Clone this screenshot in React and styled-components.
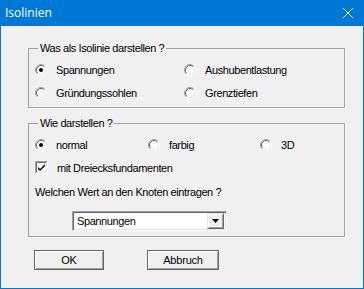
import React from 'react';
import styled, { createGlobalStyle } from 'styled-components';

const GlobalStyle = createGlobalStyle`
    html, body {
        margin: 0;
        padding: 0;
        background: #f0f0f0;
    }

    body {
        font-family: "Liberation Sans", Arial, sans-serif;
        font-size: 11px;
        letter-spacing: -0.4px;
        color: #000;
    }
`;

const Window = styled.div`
    width: 364px;
    height: 289px;
    box-sizing: border-box;
    border: 1px solid #0078d7;
    border-top: none;
    background: #f0f0f0;
    display: flex;
    flex-direction: column;
`;

const TitleBar = styled.div`
    height: 26px;
    margin: 0 -1px;
    background: #0078d7;
    color: #fff;
    display: flex;
    align-items: center;
    justify-content: space-between;
    padding: 0 11px 0 5px;
    flex-shrink: 0;
`;

const Title = styled.span`
    font-family: "Open Sans", "Noto Sans", sans-serif;
    font-size: 12px;
    letter-spacing: 0;
    line-height: 16px;
    margin-top: -1px;
`;

const Body = styled.div`
    padding: 16px 18px 0 27px;
    display: flex;
    flex-direction: column;
`;

const Group = styled.fieldset`
    margin: ${props => props.$top || 0}px 0 0;
    padding: 0;
    border: 1px solid #a0a0a0;
    box-shadow: 1px 1px 0 #fff;
    min-inline-size: 0;
`;

const Legend = styled.legend`
    margin-left: 9px;
    padding: 0 2px;
    font-size: 11px;
    line-height: 13px;
`;

const GroupInner = styled.div`
    padding: 3px 6px ${props => props.$bottom}px;
`;

const OptionGrid = styled.div`
    display: grid;
    grid-template-columns: ${props => props.$cols};
`;

const Option = styled.label`
    display: flex;
    align-items: center;
    gap: 9px;
    height: 23px;
    grid-column: ${props => props.$span ? '1 / -1' : 'auto'};
    white-space: nowrap;
`;

const Question = styled.div`
    margin-top: 7px;
    line-height: 13px;
`;

const Select = styled.div`
    margin: 12px 0 0 37px;
    width: 155px;
    height: 20px;
    box-sizing: border-box;
    background: #fff;
    border: 1px solid;
    border-color: #a0a0a0 #fff #fff #a0a0a0;
    box-shadow: inset 1px 1px 0 #696969, inset -1px -1px 0 #e3e3e3;
    display: flex;
    align-items: center;
    padding: 2px 2px 2px 4px;
`;

const SelectValue = styled.span`
    flex: 1;
    line-height: 13px;
`;

const DropButton = styled.div`
    width: 17px;
    height: 16px;
    box-sizing: border-box;
    background: #f0f0f0;
    border: 1px solid;
    border-color: #e3e3e3 #696969 #696969 #e3e3e3;
    box-shadow: inset 1px 1px 0 #fff, inset -1px -1px 0 #a0a0a0;
    display: flex;
    align-items: center;
    justify-content: center;
`;

const ButtonRow = styled.div`
    display: flex;
    gap: 43px;
    margin: 13px 0 0 6px;
`;

const Button = styled.button`
    width: ${props => props.$width}px;
    height: 20px;
    box-sizing: border-box;
    padding: 0;
    background: #f0f0f0;
    border: 1px solid #646464;
    box-shadow: inset 1px 1px 0 #fff, inset -1px -1px 0 #a0a0a0;
    font-family: "Liberation Sans", Arial, sans-serif;
    font-size: 11px;
    letter-spacing: -0.2px;
    color: #000;
    line-height: 13px;
`;

const Radio = ({ checked }) => (
    <svg width="12" height="12" viewBox="0 0 12 12">
        <circle cx="6" cy="6" r="5" fill="#fff" />
        <path d="M2.11 9.89 A5.5 5.5 0 0 1 9.89 2.11" fill="none" stroke="#a0a0a0" />
        <path d="M9.89 2.11 A5.5 5.5 0 0 1 2.11 9.89" fill="none" stroke="#fff" />
        <path d="M2.82 9.18 A4.5 4.5 0 0 1 9.18 2.82" fill="none" stroke="#696969" />
        <path d="M9.18 2.82 A4.5 4.5 0 0 1 2.82 9.18" fill="none" stroke="#e3e3e3" />
        {checked && <circle cx="6" cy="6" r="2" fill="#000" />}
    </svg>
);

const Checkbox = ({ checked }) => (
    <svg width="13" height="13" viewBox="0 0 13 13">
        <rect x="0" y="0" width="13" height="13" fill="#fff" />
        <path d="M0.5 12.5 V0.5 H12.5" fill="none" stroke="#a0a0a0" />
        <path d="M12.5 0.5 V12.5 H0.5" fill="none" stroke="#fff" />
        <path d="M1.5 11.5 V1.5 H11.5" fill="none" stroke="#696969" />
        <path d="M11.5 1.5 V11.5 H1.5" fill="none" stroke="#e3e3e3" />
        {checked && (
            <path d="M3 5 L5 7 L10 2 V4 L5 9 L3 7 Z" fill="#000" transform="translate(0 1)" />
        )}
    </svg>
);

const CloseIcon = () => (
    <svg width="10" height="10" viewBox="0 0 10 10">
        <path d="M0 0 L10 10 M10 0 L0 10" stroke="#fff" strokeWidth="1" />
    </svg>
);

export default function App() {
    return (
        <>
            <GlobalStyle />
            <Window>
                <TitleBar>
                    <Title>Isolinien</Title>
                    <CloseIcon />
                </TitleBar>
                <Body>
                    <Group>
                        <Legend>Was als Isolinie darstellen ?</Legend>
                        <GroupInner $bottom={3}>
                            <OptionGrid $cols="149px 1fr">
                                <Option><Radio checked />Spannungen</Option>
                                <Option><Radio />Aushubentlastung</Option>
                                <Option><Radio />Gründungssohlen</Option>
                                <Option><Radio />Grenztiefen</Option>
                            </OptionGrid>
                        </GroupInner>
                    </Group>

                    <Group $top={9}>
                        <Legend>Wie darstellen ?</Legend>
                        <GroupInner $bottom={5}>
                            <OptionGrid $cols="113px 112px 1fr">
                                <Option><Radio checked />normal</Option>
                                <Option><Radio />farbig</Option>
                                <Option><Radio />3D</Option>
                                <Option $span><Checkbox checked />mit Dreiecksfundamenten</Option>
                            </OptionGrid>
                            <Question>Welchen Wert an den Knoten eintragen ?</Question>
                            <Select>
                                <SelectValue>Spannungen</SelectValue>
                                <DropButton>
                                    <svg width="7" height="4" viewBox="0 0 7 4">
                                        <path d="M0 0 H7 L3.5 4 Z" fill="#000" />
                                    </svg>
                                </DropButton>
                            </Select>
                        </GroupInner>
                    </Group>

                    <ButtonRow>
                        <Button $width={70}>OK</Button>
                        <Button $width={72}>Abbruch</Button>
                    </ButtonRow>
                </Body>
            </Window>
        </>
    );
}
